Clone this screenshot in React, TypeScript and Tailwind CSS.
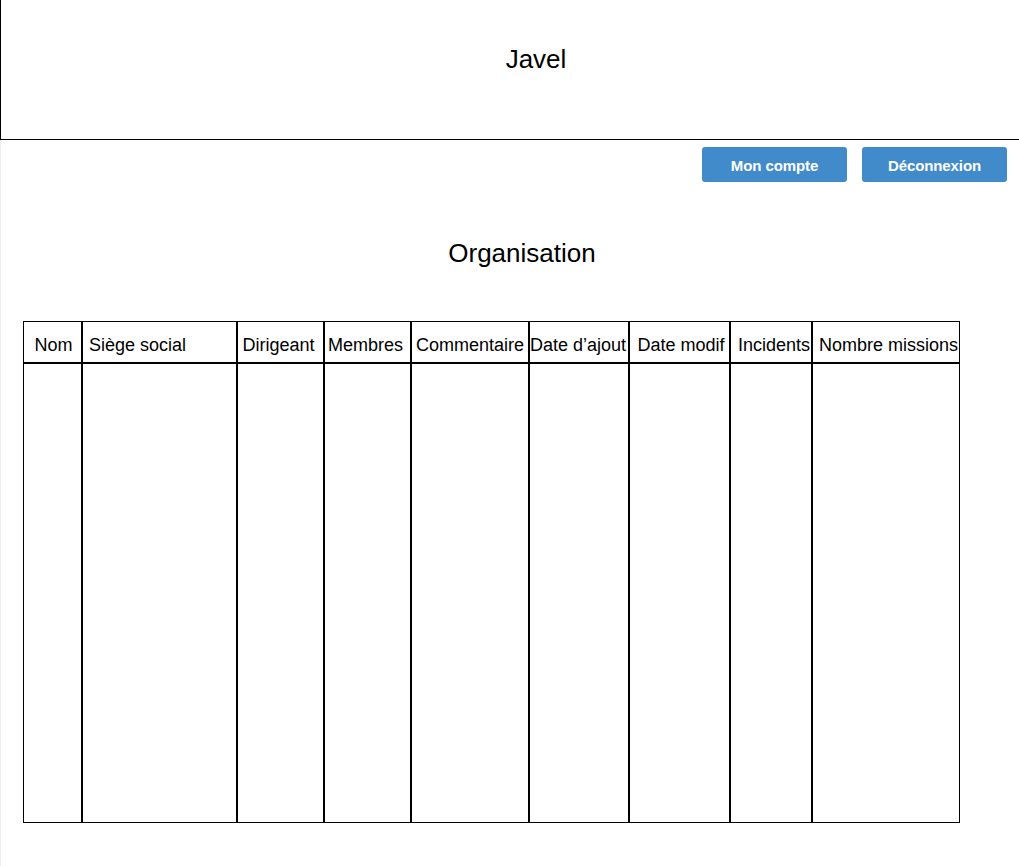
const columns = [
  { label: 'Nom', align: 'text-center pl-[2px]' },
  { label: 'Siège social', align: 'text-left pl-[6px]' },
  { label: 'Dirigeant', align: 'text-center pr-[4px]' },
  { label: 'Membres', align: 'text-center pr-[4px]' },
  { label: 'Commentaire', align: 'text-center' },
  { label: 'Date d’ajout', align: 'text-center pr-[2px]' },
  { label: 'Date modif', align: 'text-center pl-[3px]' },
  { label: 'Incidents', align: 'text-center pl-[6px]' },
  { label: 'Nombre missions', align: 'text-center pl-[5px]' },
];

export default function App() {
  return (
    <div className="min-h-[866px] bg-white font-['Liberation_Sans',Arial,sans-serif] text-black">
      <header className="h-[140px] border-b border-l border-black">
        <h1 className="pt-[44px] pl-[52px] text-center text-[26px] leading-[30px]">Javel</h1>
      </header>

      <main className="min-h-[726px] border-l border-[#eeeeee]">
        <div className="flex justify-end gap-[15px] pt-[7px] pr-[12px]">
          <button className="h-[35px] w-[145px] rounded-[3px] bg-[#428bca] pt-[3px] text-[15px] font-bold tracking-[-0.1px] text-white">
            Mon compte
          </button>
          <button className="h-[35px] w-[145px] rounded-[3px] bg-[#428bca] pt-[3px] text-[15px] font-bold tracking-[-0.1px] text-white">
            Déconnexion
          </button>
        </div>

        <h2 className="mt-[56px] pl-[24px] text-center text-[26px] leading-[30px]">Organisation</h2>

        <div className="mt-[53px] ml-[22px] w-[937px] border border-black">
          <div className="grid grid-cols-[57px_155px_87px_87px_118px_100px_101px_82px_148px] border-b-2 border-black">
            {columns.map((c, i) => (
              <div
                key={c.label}
                className={`flex h-[40px] items-center whitespace-nowrap pt-[6px] text-[18px] ${i > 0 ? 'border-l-2 border-black' : ''} ${c.align}`}
              >
                <span className="w-full">{c.label}</span>
              </div>
            ))}
          </div>
          <div className="grid h-[458px] grid-cols-[57px_155px_87px_87px_118px_100px_101px_82px_148px]">
            {columns.map((c, i) => (
              <div key={c.label} className={i > 0 ? 'border-l-2 border-black' : ''} />
            ))}
          </div>
        </div>
      </main>
    </div>
  );
}
